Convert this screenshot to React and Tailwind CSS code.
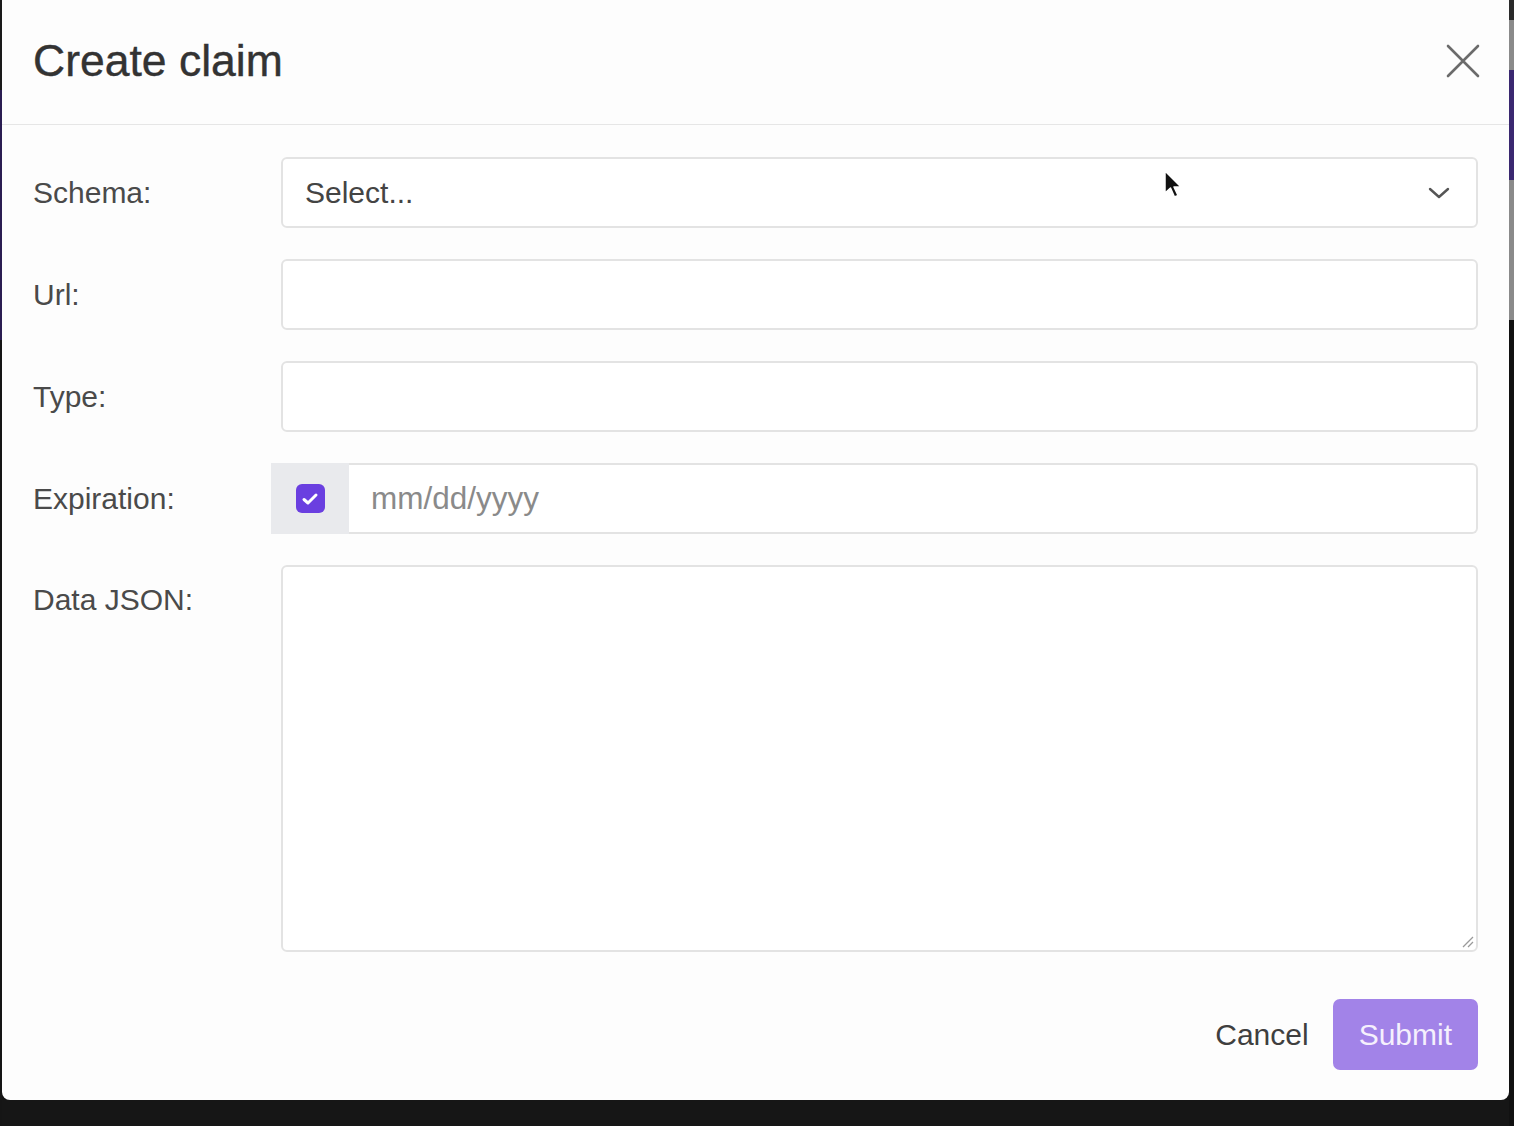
import React from "react";

const font = { fontFamily: '"Liberation Sans", Arial, sans-serif' };

function Row({ label, children, top }) {
  return (
    <div className="flex">
      <div className={`w-[248px] shrink-0 flex ${top ? "items-start pt-[12px]" : "items-center h-[71px]"} text-[30px] text-[#4a4a4a]`}>
        {label}
      </div>
      <div className="flex-1 min-w-0">{children}</div>
    </div>
  );
}

export default function App() {
  return (
    <div className="w-[1514px] h-[1126px] bg-[#121212] flex overflow-hidden" style={font}>
      <div className="w-[2px] shrink-0 flex flex-col">
        <div className="h-[90px] bg-[#1a1a1a]" />
        <div className="h-[250px] bg-[#2a1d52]" />
        <div className="flex-1 bg-[#151515]" />
      </div>
      <div className="w-[1507px] shrink-0 flex flex-col">
        <div className="h-[1100px] bg-[#fdfdfd] rounded-b-[8px] flex flex-col relative">
          {/* header */}
          <div className="h-[125px] shrink-0 border-b border-[#e6e6e6] flex items-center justify-between pl-[31px] pr-[29px]">
            <div className="text-[44.5px] text-[#333333] leading-none pb-[2px] [-webkit-text-stroke:0.4px_#333333]">Create claim</div>
            <svg width="34" height="34" viewBox="0 0 34 34" className="mt-[-2px]">
              <path d="M2 2 L32 32 M32 2 L2 32" stroke="#6b6b6b" strokeWidth="2.6" strokeLinecap="round" />
            </svg>
          </div>
          {/* body */}
          <div className="px-[31px] pt-[32px] flex flex-col gap-[31px]">
            <Row label="Schema:">
              <div className="h-[71px] border-2 border-[#e3e3e3] rounded-[6px] bg-white flex items-center justify-between pl-[22px] pr-[26px]">
                <span className="text-[30px] text-[#444444]">Select...</span>
                <svg width="22" height="14" viewBox="0 0 22 14">
                  <path d="M2 3 L11 11 L20 3" stroke="#555555" strokeWidth="2.4" fill="none" strokeLinecap="round" strokeLinejoin="round" />
                </svg>
              </div>
            </Row>
            <Row label="Url:">
              <div className="h-[71px] border-2 border-[#e3e3e3] rounded-[6px] bg-white" />
            </Row>
            <Row label="Type:">
              <div className="h-[71px] border-2 border-[#e3e3e3] rounded-[6px] bg-white" />
            </Row>
            <Row label="Expiration:">
              <div className="h-[71px] ml-[-10px] flex">
                <div className="w-[78px] shrink-0 bg-[#e9eaed] flex items-center justify-center">
                  <div className="w-[29px] h-[29px] rounded-[6px] bg-[#6a3fe0] flex items-center justify-center">
                    <svg width="18" height="14" viewBox="0 0 18 14">
                      <path d="M3 7.5 L7 11 L15 3" stroke="#ffffff" strokeWidth="3" fill="none" strokeLinecap="round" strokeLinejoin="round" />
                    </svg>
                  </div>
                </div>
                <div className="flex-1 border-2 border-l-0 border-[#e3e3e3] rounded-r-[6px] bg-white flex items-center pl-[22px]">
                  <span className="text-[31.5px] text-[#8a8a8a]">mm/dd/yyyy</span>
                </div>
              </div>
            </Row>
            <Row label="Data JSON:" top>
              <div className="h-[387px] border-2 border-[#e3e3e3] rounded-[6px] bg-white relative">
                <svg width="14" height="14" viewBox="0 0 14 14" className="absolute right-[2px] bottom-[2px]">
                  <path d="M3 13 L13 3 M8 13 L13 8" stroke="#9a9a9a" strokeWidth="1.3" />
                </svg>
              </div>
            </Row>
          </div>
          {/* footer */}
          <div className="mt-[47px] px-[31px] flex justify-end items-center gap-[24px]">
            <span className="text-[30px] text-[#3f3f3f]">Cancel</span>
            <div className="h-[71px] px-[26px] rounded-[7px] bg-[#a283e8] flex items-center text-[30px] text-[#f5f0fd]">
              Submit
            </div>
          </div>
          {/* mouse cursor */}
          <svg width="22" height="32" viewBox="0 0 22 32" className="absolute left-[1160px] top-[169px]">
            <path d="M3 2 L3 24 L8.5 19 L12.5 28 L16 26.5 L12 18 L19 18 Z" fill="#111111" stroke="#ffffff" strokeWidth="1.5" strokeLinejoin="round" />
          </svg>
        </div>
        <div className="flex-1 bg-[#161616]" />
      </div>
      <div className="flex-1 flex flex-col">
        <div className="h-[20px] bg-[#2a2a2a]" />
        <div className="h-[50px] bg-[#8a8a8a]" />
        <div className="h-[110px] bg-[#3a2870]" />
        <div className="h-[140px] bg-[#8a8a8a]" />
        <div className="flex-1 bg-[#111111]" />
      </div>
    </div>
  );
}
